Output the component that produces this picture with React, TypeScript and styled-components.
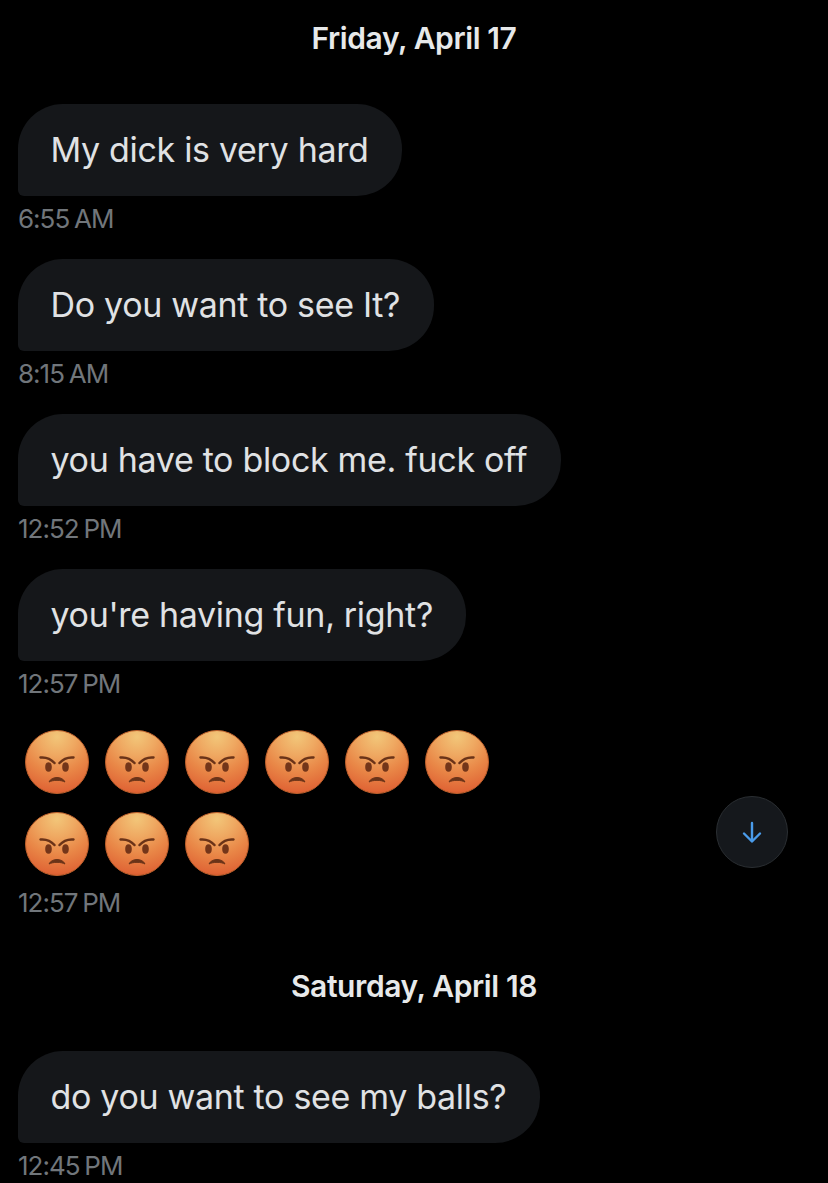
import React from 'react';
import styled, { createGlobalStyle } from 'styled-components';

const GlobalStyle = createGlobalStyle`
	html, body {
		margin: 0;
		padding: 0;
		background: #000;
	}
`;

const messagesBefore = [
	{ text: 'My dick is very hard', time: '6:55 AM' },
	{ text: 'Do you want to see It?', time: '8:15 AM' },
	{ text: 'you have to block me. fuck off', time: '12:52 PM' },
	{ text: "you're having fun, right?", time: '12:57 PM' },
];

const AngryFace: React.FC<{ id: string }> = ({ id }) => (
	<svg width="64" height="64" viewBox="0 0 64 64">
		<defs>
			<radialGradient id={`face-${id}`} cx="0.5" cy="0.1" r="0.95">
				<stop offset="0" stopColor="#f2c679" />
				<stop offset="0.3" stopColor="#efa962" />
				<stop offset="0.6" stopColor="#e98747" />
				<stop offset="0.9" stopColor="#e06636" />
				<stop offset="1" stopColor="#d0542b" />
			</radialGradient>
		</defs>
		<circle cx="32" cy="32" r="31.5" fill={`url(#face-${id})`} stroke="#bd602c" strokeWidth="1" />
		<path d="M15.5 27.5 C21 27 26 29 29.5 33" fill="none" stroke="#6a3318" strokeWidth="2.5" strokeLinecap="round" />
		<path d="M48.5 27.5 C43 27 38 29 34.5 33" fill="none" stroke="#6a3318" strokeWidth="2.5" strokeLinecap="round" />
		<ellipse cx="23.5" cy="37" rx="3.3" ry="4.8" fill="#733519" />
		<ellipse cx="40.5" cy="37" rx="3.3" ry="4.8" fill="#733519" />
		<path d="M24 52 C26.5 46 37.5 46 40 52 C36 49.8 28 49.8 24 52 Z" fill="#6a3318" stroke="#6a3318" strokeWidth="1" strokeLinejoin="round" />
	</svg>
);

const App: React.FC = () => (
	<Page>
		<GlobalStyle />
		<DateLabel>Friday, April 17</DateLabel>
		{messagesBefore.map(m => (
			<Message key={m.time + m.text}>
				<Bubble>{m.text}</Bubble>
				<Time>{m.time}</Time>
			</Message>
		))}
		<EmojiMessage>
			<EmojiGrid>
				{Array.from({ length: 9 }, (_, i) => (
					<AngryFace key={i} id={String(i)} />
				))}
			</EmojiGrid>
			<Time>12:57 PM</Time>
		</EmojiMessage>
		<SecondDateLabel>Saturday, April 18</SecondDateLabel>
		<Message>
			<Bubble>do you want to see my balls?</Bubble>
			<Time>12:45 PM</Time>
		</Message>
		<ScrollButton>
			<svg width="24" height="24" viewBox="0 0 24 24" fill="none" stroke="#4a9bea" strokeWidth="2.4" strokeLinecap="round" strokeLinejoin="round">
				<path d="M12 3 V21" />
				<path d="M4 13.5 L12 21.5 L20 13.5" />
			</svg>
		</ScrollButton>
	</Page>
);

const Page = styled.div`
	position: relative;
	box-sizing: border-box;
	width: 828px;
	height: 1183px;
	overflow: hidden;
	padding: 18px 18px 0;
	background: #000;
	font-family: Inter, 'Liberation Sans', sans-serif;
	color: #e0e2e4;
`;

const DateLabel = styled.div`
	height: 40px;
	line-height: 40px;
	text-align: center;
	font-size: 30px;
	font-weight: 600;
	letter-spacing: -0.4px;
	color: #e7e9ea;
	margin-bottom: 46px;
`;

const SecondDateLabel = styled(DateLabel)`
	margin-top: 41px;
	margin-bottom: 45px;
`;

const Message = styled.div`
	display: flex;
	flex-direction: column;
	align-items: flex-start;
	height: 155px;
`;

const Bubble = styled.div`
	box-sizing: border-box;
	height: 92px;
	line-height: 92px;
	padding: 0 33.5px 0 32.5px;
	background: #15171a;
	border-radius: 45px 45px 45px 6px;
	font-size: 34px;
	letter-spacing: -0.32px;
	white-space: nowrap;
`;

const Time = styled.div`
	height: 45px;
	line-height: 46px;
	font-size: 26px;
	letter-spacing: -1px;
	word-spacing: -1.5px;
	color: #71767b;
`;

const EmojiMessage = styled.div`
	display: flex;
	flex-direction: column;
	padding-top: 6px;
`;

const EmojiGrid = styled.div`
	display: grid;
	grid-template-columns: repeat(6, 64px);
	gap: 18px 16px;
	padding-left: 7px;
	margin-bottom: 4px;
`;

const ScrollButton = styled.div`
	position: absolute;
	left: 716px;
	top: 796px;
	box-sizing: border-box;
	width: 72px;
	height: 72px;
	display: flex;
	align-items: center;
	justify-content: center;
	border-radius: 50%;
	background: #15181c;
	border: 1px solid #2a2e32;
`;

export default App;
